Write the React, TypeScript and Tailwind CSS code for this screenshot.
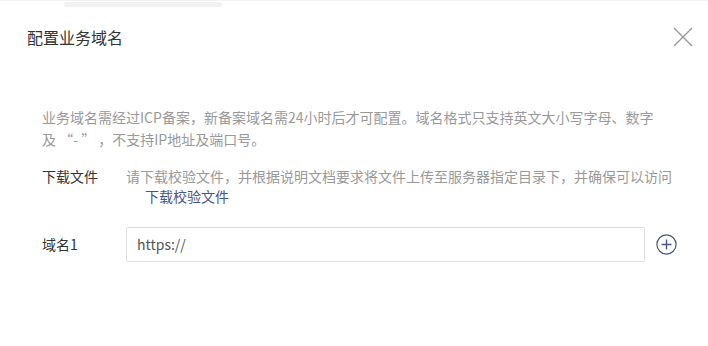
import React from "react";

export default function App() {
  const font = { fontFamily: '"Noto Sans CJK SC", "Noto Sans", sans-serif' };
  return (
    <div lang="zh-CN" className="w-[708px] h-[346px] bg-white overflow-hidden relative" style={font}>
      <div className="h-[8px] border-t border-[#f2f2f2] flex items-start pl-[64px]">
        <div className="mt-[1px] w-[158px] h-[5px] rounded-[2px] bg-[#f1f1f1]" />
      </div>
      <div className="flex items-center justify-between pl-[27px] pr-[14px] pt-[17px]">
        <div className="text-[16px] leading-[24px] text-[#333]">配置业务域名</div>
        <button className="w-[22px] h-[22px] flex items-center justify-center">
          <svg width="20" height="20" viewBox="0 0 20 20">
            <path d="M1 1L19 19M19 1L1 19" stroke="#999" strokeWidth="1.4" fill="none" />
          </svg>
        </button>
      </div>
      <div className="pl-[42px] pr-[30px] pt-[57px]">
        <p className="text-[14px] leading-[22px] text-[#999] whitespace-nowrap">
          业务域名需经过ICP备案，新备案域名需24小时后才可配置。域名格式只支持英文大小写字母、数字
          <br />
          及 “- ” ，不支持IP地址及端口号。
        </p>
        <div className="flex mt-[16px] text-[14px] leading-[20px]">
          <div className="w-[84px] shrink-0 text-[#333]">下载文件</div>
          <div>
            <div className="text-[#999] whitespace-nowrap">
              请下载校验文件，并根据说明文档要求将文件上传至服务器指定目录下，并确保可以访问
            </div>
            <div className="pl-[19px] text-[#46558a]">下载校验文件</div>
          </div>
        </div>
        <div className="flex items-center mt-[21px] text-[14px]">
          <div className="w-[84px] shrink-0 text-[#333]">域名1</div>
          <div className="w-[519px] shrink-0 h-[35px] border border-[#e0e0e0] rounded-[2px] flex items-center pl-[10px] text-[#555]">
            https://
          </div>
          <div className="ml-[11px] shrink-0 flex">
            <svg width="21" height="21" viewBox="0 0 21 21">
              <circle cx="10.5" cy="10.5" r="9.6" stroke="#4a5583" strokeWidth="1.2" fill="none" />
              <path d="M10.5 5.5V15.5M5.5 10.5H15.5" stroke="#4a5583" strokeWidth="1.4" />
            </svg>
          </div>
        </div>
      </div>
    </div>
  );
}
